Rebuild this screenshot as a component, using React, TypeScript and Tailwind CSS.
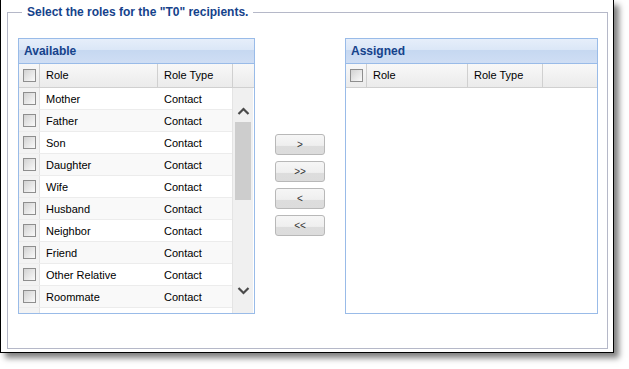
import React from 'react';

const roles = [
  'Mother',
  'Father',
  'Son',
  'Daughter',
  'Wife',
  'Husband',
  'Neighbor',
  'Friend',
  'Other Relative',
  'Roommate',
  '',
];

const CheckBox = () => (
  <span className="block h-[13px] w-[13px] border border-[#8e8e8e] bg-[linear-gradient(135deg,#d2d2d2_0%,#e6e6e6_50%,#fafafa_100%)]" />
);

const Chevron = ({ up }: { up?: boolean }) => (
  <svg width="13" height="8" viewBox="0 0 13 8" className="mx-auto block">
    <polyline
      points={up ? '1.5,7 6.5,2 11.5,7' : '1.5,1 6.5,6 11.5,1'}
      fill="none"
      stroke="#4a4a4a"
      strokeWidth="2.2"
    />
  </svg>
);

interface GridPanelProps {
  title: string;
  width: string;
  roleW: string;
  children?: React.ReactNode;
}

const GridPanel: React.FC<GridPanelProps> = ({ title, width, roleW, children }) => (
  <div className={`${width} flex h-[276px] shrink-0 flex-col border border-[#99bbe8] bg-white`}>
    <div className="flex h-[25px] items-center border-b border-[#99bbe8] bg-[linear-gradient(to_bottom,#e6eefa_0%,#dbe7f7_44%,#c6d8f1_47%,#cfdef4_100%)] pl-[5px] text-[12px] font-bold text-[#15428b]">
      {title}
    </div>
    <div className="flex h-[24px] border-b border-[#d0d0d0] bg-[linear-gradient(to_bottom,#f8f8f8,#ebebeb)] text-[11px] text-black">
      <div className="flex w-[21px] shrink-0 items-center justify-center border-r border-[#d0d0d0]">
        <CheckBox />
      </div>
      <div className={`${roleW} flex shrink-0 items-center border-r border-[#d0d0d0] pl-[6px]`}>Role</div>
      <div className="flex w-[75px] shrink-0 items-center border-r border-[#d0d0d0] pl-[6px]">Role Type</div>
      <div className="flex-1" />
    </div>
    <div className="flex-1 overflow-hidden">{children}</div>
  </div>
);

export default function App() {
  return (
    <div className="min-h-screen bg-white font-['Liberation_Sans',Arial,sans-serif]">
      <div className="w-[614px] border-x border-b border-black bg-white pb-[3px] pt-[5px] shadow-[5px_5px_6px_rgba(0,0,0,0.5)]">
        <fieldset className="ml-[6px] w-[601px] border border-[#b5b8c8] pb-[34px]">
          <legend className="ml-[14px] px-[5px] text-[12px] font-bold leading-[14px] text-[#15428b]">
            Select the roles for the "T0" recipients.
          </legend>
          <div className="mt-[19px] flex items-start pl-[10px]">
            <GridPanel title="Available" width="w-[237px]" roleW="w-[118px]">
              <div className="flex h-full">
                <div className="w-[214px] shrink-0 border-r border-[#e4e4e4]">
                  {roles.map((r, i) => (
                    <div
                      key={i}
                      className={`flex h-[22px] border-b border-[#ececec] text-[11px] text-black ${i % 2 === 1 ? 'bg-[#f9f9f9]' : 'bg-white'}`}
                    >
                      <div className="flex w-[21px] shrink-0 items-center justify-center border-r border-[#e2e2e2] bg-[#f3f3f3]">
                        {r && <CheckBox />}
                      </div>
                      <div className="flex w-[118px] shrink-0 items-center pl-[6px] pt-[1px]">{r}</div>
                      <div className="flex items-center pl-[6px] pt-[1px]">{r && 'Contact'}</div>
                    </div>
                  ))}
                </div>
                <div className="flex w-[20px] flex-col bg-[#f0f0f0] pb-[18px] pt-[19px]">
                  <Chevron up />
                  <div className="ml-[2px] mt-[7px] h-[78px] w-[16px] bg-[#cdcdcd]" />
                  <div className="flex-1" />
                  <Chevron />
                </div>
              </div>
            </GridPanel>

            <div className="ml-[20px] mt-[96px] flex w-[50px] flex-col gap-[6px]">
              {['>', '>>', '<', '<<'].map((b) => (
                <button
                  key={b}
                  className="h-[21px] w-[50px] rounded-[3px] border border-[#b8b8b8] bg-[linear-gradient(to_bottom,#f6f6f6_0%,#efefef_55%,#dddddd_58%,#dcdcdc_100%)] pt-[1px] text-[10px] leading-none text-[#333]"
                >
                  {b}
                </button>
              ))}
            </div>

            <div className="ml-[20px]">
              <GridPanel title="Assigned" width="w-[253px]" roleW="w-[101px]" />
            </div>
          </div>
        </fieldset>
      </div>
    </div>
  );
}
